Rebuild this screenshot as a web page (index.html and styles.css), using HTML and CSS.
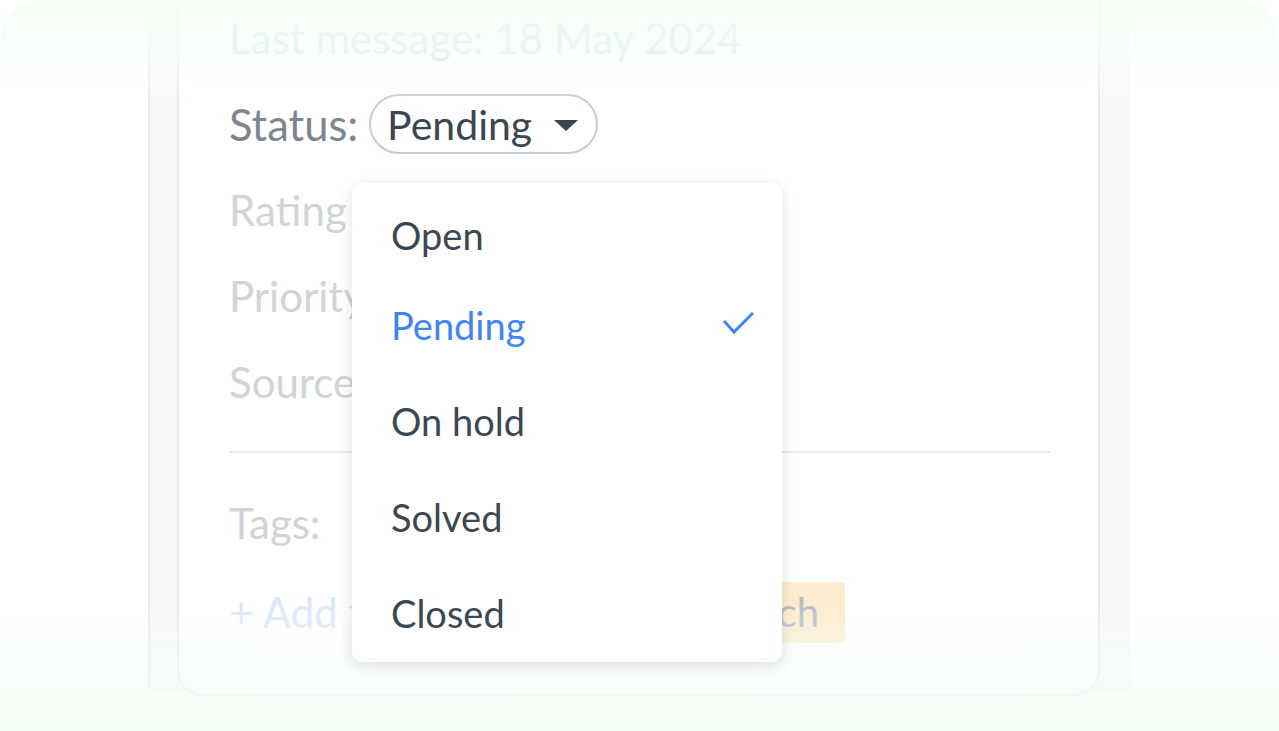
FILE: index.html
```html
<!DOCTYPE html>
<html lang="en">
<head>
  <meta charset="UTF-8">
  <meta name="viewport" content="width=device-width, initial-scale=1.0">
  <title>Ticket Status</title>
  <link rel="stylesheet" href="styles.css">
</head>
<body>

  <div class="frame">
    <div class="panel">
      <div class="card">
        <div class="row faded-top">
          <span>Last message:</span>
          <span>18 May 2024</span>
        </div>

        <div class="row">
          <span class="label">Status:</span>
          <button class="status-pill">
            Pending
            <span class="caret"></span>
          </button>
        </div>

        <div class="row muted">Rating</div>
        <div class="row muted">Priority</div>
        <div class="row muted">Source</div>

        <div class="divider"></div>

        <div class="row muted">Tags:</div>
        <div class="row tag-row">
          <span class="add-tag">+ Add tag</span>
          <span class="tag">Research</span>
        </div>
      </div>
    </div>

    <div class="fade fade-top"></div>
    <div class="fade fade-bottom"></div>

    <!-- status menu, open over the card -->
    <ul class="menu">
      <li>Open</li>
      <li class="selected">
        Pending
        <svg class="check" width="32" height="26" viewBox="0 0 32 26">
          <polyline points="2,9 12,20 31,1" fill="none" stroke="currentColor" stroke-width="3"/>
        </svg>
      </li>
      <li>On hold</li>
      <li>Solved</li>
      <li>Closed</li>
    </ul>
  </div>

</body>
</html>
```

FILE: styles.css
```css
* {
  box-sizing: border-box;
}

body {
  margin: 0;
  background: #ffffff;
  font-family: 'Lato', 'Open Sans', sans-serif;
  overflow: hidden;
}

.frame {
  position: relative;
  width: 1279px;
  height: 731px;
  overflow: hidden;
  border-radius: 40px 44px 0 0;
}

.panel {
  margin-left: 148px;
  width: 982px;
  height: 100%;
  padding-left: 27px;
  background: #f7f8f9;
  border-left: 2px solid #e8ebef;
}

.card {
  width: 923px;
  margin-top: -40px;
  padding: 33px 48px 36px 50px;
  background: #ffffff;
  border: 2px solid #e6e9ed;
  border-radius: 0 0 26px 26px;
}

.row {
  height: 86px;
  display: flex;
  align-items: center;
  gap: 11px;
  font-size: 42px;
  white-space: nowrap;
  color: #d0d4d8;
}

.faded-top {
  color: #c9cfd4;
}

.label {
  font-size: 43.5px;
  color: #7d868f;
}

.status-pill {
  display: flex;
  align-items: center;
  gap: 22px;
  height: 60px;
  padding: 0 18px 0 16px;
  border: 2px solid #c4ccd6;
  border-radius: 30px;
  background: #ffffff;
  font-family: inherit;
  font-size: 41px;
  color: #3c4651;
}

.caret {
  width: 0;
  height: 0;
  margin-top: 2px;
  border-left: 12px solid transparent;
  border-right: 12px solid transparent;
  border-top: 11px solid #3a4550;
}

.divider {
  height: 2px;
  margin: 26px 0 27px;
  background: #e6e9ed;
}

.tag-row {
  height: 92px;
  justify-content: space-between;
}

.add-tag {
  color: #dce6fb;
}

.tag {
  margin-right: 205px;
  padding: 6px 26px 7px 14px;
  border-radius: 5px;
  background: #fdecce;
  font-size: 40px;
  color: #b5bbc1;
}

.menu {
  position: absolute;
  left: 352px;
  top: 183px;
  width: 430px;
  height: 479px;
  margin: 0;
  padding: 10px 0 0;
  list-style: none;
  background: #ffffff;
  border-radius: 10px;
  box-shadow: 0 3px 14px rgba(30, 40, 50, 0.14);
}

.menu li {
  height: 96px;
  display: flex;
  align-items: center;
  justify-content: space-between;
  padding: 0 28px 0 39px;
  font-size: 38px;
  color: #3d4752;
}

.menu li:first-child {
  height: 84px;
}

.menu li.selected {
  color: #3f85f4;
}

.fade {
  position: absolute;
  left: 0;
  right: 0;
  pointer-events: none;
}

.fade-top {
  top: 0;
  height: 100px;
  background: linear-gradient(to bottom, rgba(244, 253, 245, 0.9) 0, rgba(246, 254, 247, 0.8) 50px, rgba(250, 255, 250, 0.4) 78px, rgba(255, 255, 255, 0) 100px);
}

.fade-bottom {
  bottom: 0;
  height: 130px;
  background: linear-gradient(to bottom, rgba(255, 255, 255, 0) 0, rgba(244, 253, 245, 0.6) 60px, rgba(243, 253, 244, 0.9) 130px);
}
```
